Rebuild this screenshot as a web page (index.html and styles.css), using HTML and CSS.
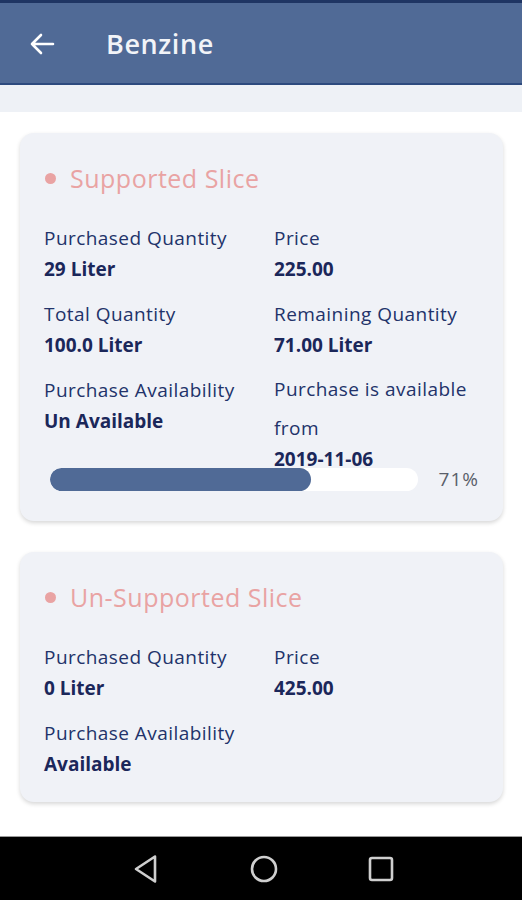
FILE: index.html
```html
<!DOCTYPE html>
<html>
<head>
<meta charset="utf-8">
<link rel="stylesheet" href="styles.css">
</head>
<body>
<div class="screen">
  <header class="appbar">
    <svg class="back" width="26" height="22" viewBox="0 0 26 22"><path d="M24 11H3M12 2L3 11l9 9" fill="none" stroke="#fff" stroke-width="2.6" stroke-linecap="round" stroke-linejoin="round"/></svg>
    <h1 class="title">Benzine</h1>
  </header>
  <div class="band"></div>
  <main class="content">
    <section class="card">
      <div class="card-title"><span class="dot"></span>Supported Slice</div>
      <div class="grid">
        <div class="cell"><div class="label">Purchased Quantity</div><div class="value">29 Liter</div></div>
        <div class="cell"><div class="label">Price</div><div class="value">225.00</div></div>
        <div class="cell"><div class="label">Total Quantity</div><div class="value">100.0 Liter</div></div>
        <div class="cell"><div class="label">Remaining Quantity</div><div class="value">71.00 Liter</div></div>
        <div class="cell"><div class="label">Purchase Availability</div><div class="value">Un Available</div></div>
        <div class="cell"><div class="label tall">Purchase is available from</div><div class="value tight">2019-11-06</div></div>
      </div>
      <div class="progress-row">
        <div class="track"><div class="fill" style="width:71%"></div></div>
        <span class="pct">71%</span>
      </div>
    </section>
    <section class="card card2">
      <div class="card-title"><span class="dot"></span>Un-Supported Slice</div>
      <div class="grid">
        <div class="cell"><div class="label">Purchased Quantity</div><div class="value">0 Liter</div></div>
        <div class="cell"><div class="label">Price</div><div class="value">425.00</div></div>
        <div class="cell"><div class="label">Purchase Availability</div><div class="value">Available</div></div>
      </div>
    </section>
  </main>
  <nav class="navbar">
    <svg width="28" height="30" viewBox="0 0 28 30"><path d="M22 2.5L3 15l19 12.5z" fill="none" stroke="#cfcfcf" stroke-width="2.6" stroke-linejoin="round"/></svg>
    <svg width="30" height="30" viewBox="0 0 30 30"><circle cx="15" cy="15" r="12" fill="none" stroke="#cfcfcf" stroke-width="2.6"/></svg>
    <svg width="28" height="28" viewBox="0 0 28 28"><rect x="3" y="3" width="22" height="22" rx="2" fill="none" stroke="#cfcfcf" stroke-width="2.6"/></svg>
  </nav>
</div>
</body>
</html>
```

FILE: styles.css
```css
* { box-sizing: border-box; }
html, body { margin: 0; padding: 0; }
body {
  font-family: "Open Sans", "Noto Sans", sans-serif;
  background: #ffffff;
}
.screen {
  width: 522px;
  height: 900px;
  display: flex;
  flex-direction: column;
  overflow: hidden;
}
.appbar {
  height: 85px;
  background: #506a96;
  border-top: 3px solid #1f3563;
  border-bottom: 2px solid #2d4a7e;
  display: flex;
  align-items: center;
  padding-left: 29px;
  flex: none;
}
.back { display: block; margin-top: 1px; }
.title {
  margin: 0 0 0 51px;
  font-size: 27px;
  font-weight: 600;
  color: #f2f4f8;
  letter-spacing: 0.6px;
}
.band {
  height: 27px;
  background: #eef1f6;
  flex: none;
}
.content {
  flex: 1;
  padding: 21px 19px 0 20px;
}
.card {
  background: #f0f2f7;
  border-radius: 14px;
  box-shadow: 0 2px 4px rgba(0,0,0,0.16);
  padding: 30px 24px 29px 24px;
}
.card2 {
  margin-top: 31px;
  padding-bottom: 22px;
}
.card-title {
  display: flex;
  align-items: center;
  height: 30px;
  font-size: 25px;
  letter-spacing: 0.5px;
  color: #e9a3a3;
  margin-bottom: 30px;
}
.dot {
  width: 11px;
  height: 11px;
  border-radius: 50%;
  background: #e9a3a3;
  margin: 0 14px 0 1px;
}
.grid {
  display: grid;
  grid-template-columns: 230px 1fr;
  row-gap: 14px;
}
.label {
  font-size: 19px;
  letter-spacing: 0.45px;
  line-height: 30px;
  color: #22336a;
  white-space: normal;
}
.label.tall {
  line-height: 39px;
  margin-top: -5px;
}
.value {
  font-size: 19px;
  font-weight: 700;
  line-height: 32px;
  color: #1b275a;
}
.value.tight { margin-top: -5px; }
.progress-row {
  display: flex;
  align-items: center;
  margin-top: -9px;
  position: relative;
}
.track {
  width: 368px;
  height: 23px;
  margin-left: 6px;
  background: #ffffff;
  border-radius: 12px;
  overflow: hidden;
}
.fill {
  height: 100%;
  background: #506a96;
  border-radius: 12px;
}
.pct {
  margin-left: auto;
  font-size: 19px;
  letter-spacing: 1px;
  color: #5a5f6a;
}
.navbar {
  flex: none;
  height: 64px;
  background: #000;
  border-top: 1px solid #9a9a9a;
  display: flex;
  align-items: center;
  justify-content: center;
  gap: 88px;
  padding-left: 6px;
}
.navbar svg { display: block; }
```
